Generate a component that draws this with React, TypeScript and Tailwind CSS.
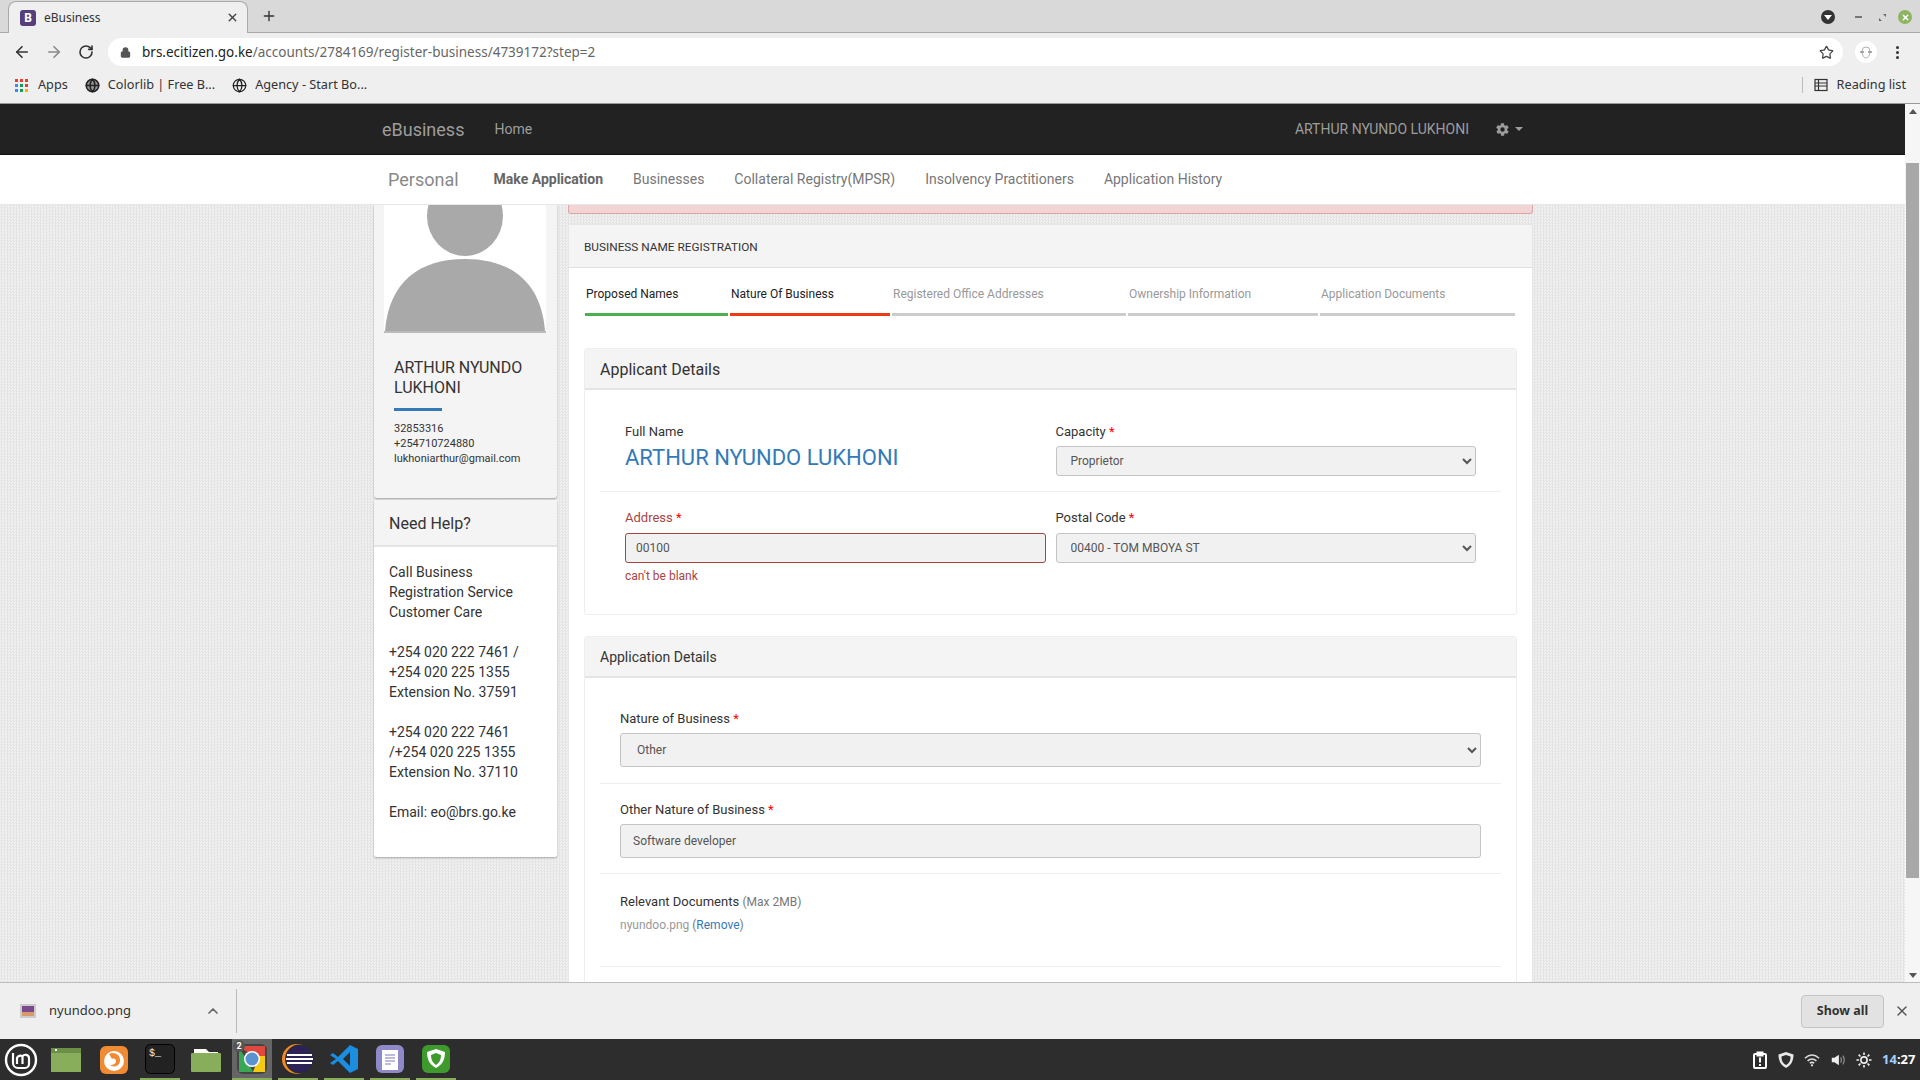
import React from "react";
import { ArrowLeft, ArrowRight, RotateCw, Lock, Star, X, Plus, ChevronUp, Globe } from "lucide-react";

const Req = () => <span className="text-[#ff0000]"> *</span>;
const ctl = "w-full rounded-[3px] border border-[#c4c4c4] bg-[#f1f1f1] text-[12px] text-[#555] outline-none";

function Field({ label, error, children }: { label: string; error?: boolean; children: React.ReactNode }) {
  return (
    <div className="flex-1">
      <label className={`block text-[13px] leading-[16px] mb-[6px] ${error ? "text-[#a94442]" : "text-[#333]"}`}>
        {label}
        <Req />
      </label>
      {children}
    </div>
  );
}

function Card({ title, titleSize, className, children }: { title: string; titleSize: string; className: string; children: React.ReactNode }) {
  return (
    <section className={`border border-[#eeeeee] rounded-[3px] bg-white ${className}`}>
      <h3 className={`h-[41px] pt-[2px] flex items-center px-[15px] bg-[#f4f4f4] border-b-2 border-[#e4e4e4] text-[#333] ${titleSize}`}>{title}</h3>
      {children}
    </section>
  );
}

function Step({ label, width, color, bold }: { label: string; width: string; color: string; bold?: boolean }) {
  return (
    <div className={width}>
      <div className={`h-[41px] pt-[14px] pl-[1px] text-[12px] leading-[16px] ${bold ? "text-[#222]" : "text-[#999]"}`}>{label}</div>
      <div className={`h-[3px] ${color}`} />
    </div>
  );
}

function Tray() {
  return (
    <div className="flex items-center gap-[10px] text-white pr-[4px]">
      <svg width="16" height="18" viewBox="0 0 16 18" fill="none" stroke="#fff" strokeWidth="2"><rect x="2" y="3" width="12" height="14" rx="1" /><path d="M5.500 1.500h5v3h-5zM8 6.500v5M8 13v2" /></svg>
      <svg width="16" height="18" viewBox="0 0 16 18" fill="#e8e8e8"><path d="M8 1l7.500 2.500c0 6-2 10.500-7.500 13.500C2.500 14 .5 9.500 .5 3.500z" /><path d="M8 4l4.500 1.500c0 4-1 6.500-4.500 8.500-3.500-2-4.500-4.500-4.500-8.500z" fill="#2d2d2d" /></svg>
      <svg width="16" height="16" viewBox="0 0 18 18" fill="none" stroke="#ddd" strokeWidth="1.700"><path d="M1 7c5-4.500 11-4.500 16 0M4 10c3-2.500 7-2.500 10 0M6.500 12.500c1.500-1 3.500-1 5 0" /><circle cx="9" cy="15" r="1.300" fill="#ddd" stroke="none" /></svg>
      <svg width="16" height="16" viewBox="0 0 18 18" fill="none"><path d="M2 6.500h3L10 3v12l-5-3.500H2z" fill="#eee" /><path d="M12 6c1 2 1 4 0 6M14.500 4c1.800 3 1.800 7 0 10" stroke="#888" strokeWidth="1.500" /></svg>
      <svg width="16" height="16" viewBox="0 0 18 18" fill="none" stroke="#eee" strokeWidth="1.800"><circle cx="9" cy="9" r="3.500" /><path d="M9 0.500v3M9 14.500v3M0.500 9h3M14.500 9h3M3 3l2 2M13 13l2 2M3 15l2-2M13 5l2-2" /></svg>
      <span className="text-[13px] font-bold text-white font-['Noto_Sans'] w-[34px]"><span className="text-[#9fd0ff]">14</span>:27</span>
    </div>
  );
}

function Slot({ children, active, line, className = "" }: { children: React.ReactNode; active?: boolean; line?: boolean; className?: string }) {
  const bar = active ? "bg-[#666] border-b-[2px] border-[#88ad5b]" : line ? "border-b-[2px] border-[#88ad5b]" : "";
  return <div className={`w-[40px] mr-[6px] flex items-center justify-center ${bar} ${className}`}>{children}</div>;
}

export default function App() {
  return (
    <div className="w-[1920px] h-[1080px] overflow-hidden flex flex-col font-['Roboto',sans-serif] text-[#333] bg-[#efefef]">
      {/* tab strip */}
      <div className="h-[33px] flex items-end bg-[#d9d9d9] border-b border-[#a9a9a9] pl-[8px] pr-[8px] font-['Noto_Sans',sans-serif]">
        <div className="w-[240px] h-[32px] -mb-px bg-[#efefef] rounded-t-[8px] border border-b-0 border-[#a9a9a9] flex items-center pl-[11px] pr-[8px]">
          <span className="w-[16px] h-[16px] rounded-[3px] bg-[#563d7c] text-white text-[12px] font-bold leading-[16px] text-center mr-[8px]">B</span>
          <span className="text-[12px] text-[#333] flex-1">eBusiness</span>
          <X size={13} strokeWidth={2.5} className="text-[#444]" />
        </div>
        <Plus size={16} strokeWidth={2} className="ml-[13px] mb-[8px] text-[#333]" />
        <div className="flex-1" />
        <div className="flex items-center mb-[8px]">
          <span className="w-[14px] h-[14px] rounded-full bg-[#333] flex items-center justify-center"><span className="w-0 h-0 border-x-[4px] border-x-transparent border-t-[5px] border-t-white" /></span>
          <span className="ml-[20px] w-[7px] h-[2px] bg-[#777]" />
          <svg className="ml-[17px]" width="7" height="7" viewBox="0 0 7 7" fill="#666"><path d="M4 0h3v3zM0 4l3 3H0z" /></svg>
          <span className="ml-[12px] w-[14px] h-[14px] rounded-full bg-[#8db561] text-white flex items-center justify-center"><X size={9} strokeWidth={4} /></span>
        </div>
      </div>
      {/* address bar */}
      <div className="h-[36px] pt-[2px] flex items-center bg-[#efefef] pl-[13px]">
        <ArrowLeft size={18} strokeWidth={2.2} className="text-[#333]" />
        <ArrowRight size={18} strokeWidth={2.2} className="ml-[14px] text-[#8a8a8a]" />
        <RotateCw size={16} strokeWidth={2.4} className="ml-[15px] text-[#333]" />
        <div className="ml-[14px] w-[1735px] h-[28px] rounded-full bg-white flex items-center pl-[12px] pr-[9px] text-[13.5px] font-['Noto_Sans',sans-serif]">
          <Lock size={11} fill="#555" strokeWidth={2.5} className="text-[#555]" />
          <span className="ml-[11px] text-[#222]">brs.ecitizen.go.ke</span>
          <span className="text-[#666]">/accounts/2784169/register-business/4739172?step=2</span>
          <span className="flex-1" />
          <Star size={15} strokeWidth={2} className="text-[#444]" />
        </div>
        <span className="ml-[12px] w-[22px] h-[22px] rounded-full bg-white flex items-center justify-center">
          <svg width="14" height="14" viewBox="0 0 14 14" fill="none" stroke="#999" strokeWidth="0.800"><path d="M3 6a4 4 0 0 1 8 0M3 6c0 4 2 7 4 7s4-3 4-7" /><path d="M1 7h4M9 7h4" stroke="#666" strokeWidth="1.200" /></svg>
        </span>
        <span className="ml-[19px] flex flex-col gap-[2px]">
          <i className="w-[3px] h-[3px] rounded-full bg-[#333]" /><i className="w-[3px] h-[3px] rounded-full bg-[#333]" /><i className="w-[3px] h-[3px] rounded-full bg-[#333]" />
        </span>
      </div>
      {/* bookmarks */}
      <div className="h-[35px] flex items-center bg-[#efefef] border-b border-[#9a9a9a] pl-[15px] pr-[14px] pb-[2px] text-[12.700px] text-[#333] font-['Noto_Sans',sans-serif]">
        <span className="grid grid-cols-3 gap-[2px] w-[13px]">
          {["#db4437","#db4437","#db4437","#4285f4","#0f9d58","#db4437","#4285f4","#0f9d58","#f4b400"].map((c, i) => <i key={i} className="h-[3px] w-[3px]" style={{ background: c }} />)}
        </span>
        <span className="ml-[10px]">Apps</span>
        <Globe size={15} strokeWidth={2.5} className="ml-[17px] text-[#222]" fill="#999" />
        <span className="ml-[8px]">Colorlib | Free B...</span>
        <Globe size={15} strokeWidth={2} className="ml-[17px] text-[#222]" />
        <span className="ml-[8px]">Agency - Start Bo...</span>
        <span className="flex-1" />
        <span className="w-px h-[16px] bg-[#bbb] mr-[11px]" />
        <svg width="14" height="14" viewBox="0 0 14 14" fill="none" stroke="#333" strokeWidth="1.200"><rect x="1" y="1.500" width="12" height="11" /><path d="M1 5h12M1 8h12M4.500 1.500v11" /></svg>
        <span className="ml-[9px]">Reading list</span>
      </div>

      {/* page */}
      <div className="flex-1 min-h-0 flex">
        <div className="flex-1 flex flex-col min-w-0">
          <header className="h-[51px] shrink-0 bg-[#222] border-b border-[#111] flex items-center text-[#9d9d9d] text-[14px]">
            <span className="ml-[382px] text-[18px]">eBusiness</span>
            <span className="ml-[30px]">Home</span>
            <span className="flex-1" />
            <span>ARTHUR NYUNDO LUKHONI</span>
            <svg className="ml-[26px]" width="15" height="15" viewBox="0 0 24 24" fill="#9d9d9d"><path d="M19.400 13c.1-.3.100-.7.100-1s0-.7-.1-1l2.100-1.600c.2-.2.200-.4.100-.6l-2-3.500c-.1-.2-.4-.3-.6-.2l-2.500 1c-.5-.4-1.100-.7-1.700-1l-.4-2.600c0-.3-.2-.5-.5-.5h-4c-.3 0-.5.200-.5.500l-.4 2.600c-.6.300-1.200.6-1.700 1l-2.500-1c-.2-.1-.5 0-.6.200l-2 3.500c-.1.200-.1.400.1.600L4.600 11c-.1.300-.1.700-.1 1s0 .7.100 1l-2.100 1.600c-.2.200-.2.400-.1.600l2 3.500c.1.200.4.300.6.200l2.500-1c.5.400 1.100.7 1.700 1l.4 2.600c0 .3.200.5.500.5h4c.3 0 .5-.2.500-.5l.4-2.600c.6-.3 1.200-.6 1.700-1l2.500 1c.2.100.5 0 .6-.2l2-3.500c.1-.2.100-.4-.1-.6zM12 15.500a3.500 3.500 0 1 1 0-7 3.500 3.500 0 0 1 0 7z" /></svg>
            <span className="ml-[5px] mr-[382px] w-0 h-0 border-x-[4px] border-x-transparent border-t-[4px] border-t-[#9d9d9d]" />
          </header>
          <nav className="h-[50px] shrink-0 bg-white border-b border-[#e7e7e7] flex items-center text-[14px] text-[#777]">
            <span className="ml-[388px] text-[18px] text-[#888]">Personal</span>
            <span className="ml-[35px] font-bold text-[#666]">Make Application</span>
            <span className="ml-[30px]">Businesses</span>
            <span className="ml-[30px]">Collateral Registry(MPSR)</span>
            <span className="ml-[30px]">Insolvency Practitioners</span>
            <span className="ml-[30px]">Application History</span>
          </nav>
          <main className="flex-1 min-h-0 overflow-hidden flex items-start pl-[374px] bg-[#ebebeb] bg-[repeating-conic-gradient(#e4e4e4_0_25%,#f1f1f1_0_50%)] bg-[length:3px_3px]">
            {/* sidebar */}
            <aside className="w-[183px] shrink-0 flex flex-col gap-[2px]">
              <div className="h-[293px] bg-[#f4f4f4] rounded-b-[3px] shadow-[0_1px_2px_rgba(0,0,0,0.3)] flex flex-col">
                <div className="mx-[10px] w-[162px] h-[128px] bg-white border-b-2 border-[#bbb] overflow-hidden shrink-0">
                  <svg width="162" height="127" viewBox="0 0 162 127" fill="#a9a9a9">
                    <ellipse cx="81" cy="11" rx="38" ry="40" />
                    <path d="M1 126C5 76 36 54 81 54s76 22 80 72z" />
                  </svg>
                </div>
                <div className="pl-[20px] pr-[18px] pt-[25px] text-[16px] leading-[20px] text-[#333]">ARTHUR NYUNDO LUKHONI</div>
                <div className="ml-[20px] mt-[10px] w-[48px] h-[3px] bg-[#337ab7]" />
                <div className="pl-[20px] pr-[10px] mt-[10px] text-[11px] leading-[15.200px] text-[#333]">
                  <div>32853316</div>
                  <div>+254710724880</div>
                  <div>lukhoniarthur@gmail.com</div>
                </div>
              </div>
              <div className="h-[357px] bg-white rounded-[2px] shadow-[0_1px_2px_rgba(0,0,0,0.3)]">
                <h3 className="h-[47px] pt-[2px] bg-[#f4f4f4] border-b-2 border-[#e4e4e4] flex items-center px-[15px] text-[16px] text-[#333]">Need Help?</h3>
                <div className="px-[15px] pt-[15px] text-[14px] leading-[20px] text-[#333]">
                  <p>Call Business Registration Service Customer Care</p>
                  <p className="mt-[20px]">+254 020 222 7461 / +254 020 225 1355 Extension No. 37591</p>
                  <p className="mt-[20px]">+254 020 222 7461 /+254 020 225 1355 Extension No. 37110</p>
                  <p className="mt-[20px]">Email: eo@brs.go.ke</p>
                </div>
              </div>
            </aside>
            {/* main column */}
            <div className="ml-[11px] w-[965px] shrink-0">
              <div className="h-[9px] bg-[#f2d4d4] border-x border-b border-[#dba6a6] rounded-b-[3px]" />
              <div className="mt-[10px] bg-white border border-[#e6e6e6] min-h-[800px]">
                <div className="h-[43px] pt-[4px] flex items-center px-[15px] bg-[#f4f4f4] border-b border-[#e0e0e0] text-[11.800px] text-[#333]">BUSINESS NAME REGISTRATION</div>
                <div className="flex gap-[2px] pl-[16px] h-[72px] pt-[4px]">
                  <Step label="Proposed Names" width="w-[143px]" color="bg-[#4caf50]" bold />
                  <Step label="Nature Of Business" width="w-[160px]" color="bg-[#f03a17]" bold />
                  <Step label="Registered Office Addresses" width="w-[234px]" color="bg-[#cccccc]" />
                  <Step label="Ownership Information" width="w-[190px]" color="bg-[#cccccc]" />
                  <Step label="Application Documents" width="w-[195px]" color="bg-[#cccccc]" />
                </div>
                <Card title="Applicant Details" titleSize="text-[16px]" className="mx-[15px] mt-[8px] h-[267px]">
                  <div className="px-[15px]">
                    <div className="flex gap-[10px] pl-[25px] pr-[25px] pt-[34px] pb-[15px] border-b border-[#eeeeee]">
                      <div className="flex-1">
                        <div className="text-[13px] leading-[16px] text-[#333]">Full Name</div>
                        <div className="text-[22px] leading-[30px] mt-[3px] text-[#337ab7]">ARTHUR NYUNDO LUKHONI</div>
                      </div>
                      <Field label="Capacity">
                        <select defaultValue="p" className={`${ctl} h-[30px] pl-[10px]`}><option value="p">Proprietor</option></select>
                      </Field>
                    </div>
                    <div className="flex gap-[10px] pl-[25px] pr-[25px] pt-[18px]">
                      <Field label="Address" error>
                        <input readOnly value="00100" className="mt-[1px] w-full h-[30px] rounded-[3px] border border-[#a94442] bg-[#f1f1f1] text-[12px] text-[#555] outline-none px-[10px]" />
                        <div className="mt-[5px] text-[12px] leading-[16px] text-[#a94442]">can't be blank</div>
                      </Field>
                      <Field label="Postal Code">
                        <select defaultValue="t" className={`${ctl} mt-[1px] h-[30px] pl-[10px]`}><option value="t">00400 - TOM MBOYA ST</option></select>
                      </Field>
                    </div>
                  </div>
                </Card>
                <Card title="Application Details" titleSize="text-[14px]" className="mx-[15px] mt-[21px] h-[400px]">
                  <div className="px-[15px]">
                    <div className="px-[20px] pt-[33px] pb-[16px] border-b border-[#eeeeee]">
                      <Field label="Nature of Business">
                        <select defaultValue="o" className={`${ctl} h-[34px] pl-[12px]`}><option value="o">Other</option></select>
                      </Field>
                    </div>
                    <div className="px-[20px] pt-[18px] pb-[15px] border-b border-[#eeeeee]">
                      <Field label="Other Nature of Business">
                        <input readOnly value="Software developer" className={`${ctl} h-[34px] px-[12px]`} />
                      </Field>
                    </div>
                    <div className="px-[20px] pt-[20px] h-[93px] border-b border-[#eeeeee]">
                      <div className="text-[13px] leading-[16px] text-[#333]">Relevant Documents <span className="text-[12px] text-[#777]">(Max 2MB)</span></div>
                      <div className="mt-[7px] text-[12px] leading-[16px] text-[#999]">nyundoo.png <span className="text-[#777]">(</span><span className="text-[#337ab7]">Remove</span><span className="text-[#777]">)</span></div>
                    </div>
                  </div>
                </Card>
              </div>
            </div>
          </main>
        </div>
        {/* scrollbar */}
        <div className="w-[15px] bg-[#f6f6f6] flex flex-col items-center">
          <span className="mt-[5px] w-0 h-0 border-x-[4px] border-x-transparent border-b-[5px] border-b-[#555]" />
          <div className="mt-[49px] w-[13px] h-[715px] bg-[#a8a8a8]" />
          <span className="mt-auto mb-[4px] w-0 h-0 border-x-[4px] border-x-transparent border-t-[5px] border-t-[#555]" />
        </div>
      </div>

      {/* download bar */}
      <div className="h-[57px] shrink-0 bg-[#efefef] border-t border-[#bdbdbd] flex items-center font-['Noto_Sans',sans-serif]">
        <div className="w-[237px] h-[44px] border-r border-[#bbb] flex items-center pl-[20px]">
          <svg width="16" height="14" viewBox="0 0 16 14"><rect width="16" height="14" fill="#ccc" /><rect x="2" y="2" width="12" height="10" fill="#7a4a8c" /><rect x="2" y="8" width="12" height="4" fill="#d79a6a" /></svg>
          <span className="ml-[13px] text-[13px] text-[#333] flex-1">nyundoo.png</span>
          <ChevronUp size={16} strokeWidth={2.5} className="text-[#666] mr-[15px]" />
        </div>
        <div className="flex-1" />
        <button className="w-[83px] h-[33px] rounded-[4px] border border-[#c4c4c4] bg-[#e2e2e2] text-[12.500px] font-bold text-[#333]">Show all</button>
        <X size={16} strokeWidth={2} className="ml-[10px] mr-[10px] text-[#555]" />
      </div>

      {/* taskbar */}
      <div className="h-[41px] shrink-0 bg-[#2d2d2d] flex items-stretch pl-[4px]">
        <div className="w-[34px] flex items-center justify-center">
          <svg width="34" height="34" viewBox="0 0 34 34" fill="none" stroke="#fff"><circle cx="17" cy="17" r="15" strokeWidth="2.400" /><path d="M9 10v10a5 5 0 0 0 5 5h7a4 4 0 0 0 4-4v-6a3.500 3.500 0 0 0-6.500-1.500A3.500 3.500 0 0 0 13 15v6M18.500 14v7" strokeWidth="2.200" /></svg>
        </div>
        <div className="flex ml-[10px]">
          <Slot><svg className="-ml-[4px]" width="30" height="26" viewBox="0 0 30 26"><rect y="1" width="30" height="24" fill="#88ad5b" /><rect y="1" width="30" height="5" fill="#6b8f46" /><rect x="4" y="2" width="2" height="2" fill="#fff" /></svg></Slot>
          <Slot><svg width="28" height="28" viewBox="0 0 28 28"><rect width="28" height="28" rx="6" fill="#f08a33" /><circle cx="14" cy="15" r="10" fill="#fff" /><path d="M9 8c3-2 7-1 9 1 2 2 3 6 1 9-2 3-7 3-9 1 3 0 6-1 6-4 0-2-2-3-4-2-1-2-2-3-3-5z" fill="#f08a33" /></svg></Slot>
          <Slot line><svg width="30" height="30" viewBox="0 0 30 30"><rect x=".5" y=".5" width="29" height="29" rx="5" fill="#222" stroke="#000" /><text x="4" y="12" fontSize="10" fill="#eee" fontFamily="Liberation Mono">$_</text></svg></Slot>
          <Slot><svg width="30" height="26" viewBox="0 0 30 26"><path d="M3 2h12l3 3h9v3H3z" fill="#fff" /><rect y="6" width="30" height="19" rx="1" fill="#88ad5b" /></svg></Slot>
          <Slot active><span className="relative block w-[30px] h-[30px]"><svg width="30" height="30" viewBox="0 0 30 30"><rect width="30" height="30" rx="6" fill="#444" /><path d="M2 2h26v10H15z" fill="#e0483e" /><path d="M28 12v16H16l6-16z" fill="#f6c913" /><path d="M2 4v24h14l-6-12z" fill="#3aa757" /><circle cx="15" cy="15" r="8" fill="#fff" /><circle cx="15" cy="15" r="6.500" fill="#5b93cf" /></svg><span className="absolute -left-[4px] -top-[4px] w-[12px] h-[12px] rounded-full bg-[#555] text-white text-[9px] leading-[12px] text-center font-bold">2</span></span></Slot>
          <Slot line><svg width="32" height="30" viewBox="0 0 32 30"><circle cx="15" cy="15" r="15" fill="#f08a22" /><circle cx="17.500" cy="15" r="14.500" fill="#2d2d2d" /><circle cx="17.500" cy="15" r="13.500" fill="#2c2255" /><path d="M5 11h25M4 15h27M5 19h25" stroke="#fff" strokeWidth="1.800" /></svg></Slot>
          <Slot line><svg width="30" height="30" viewBox="0 0 30 30"><path d="M21 1l8 4v20l-8 4L9 17l-5 4-3-2 6-4-6-4 3-2 5 4z" fill="#1b8ee0" /><path d="M21 8l-7 7 7 7z" fill="#2d2d2d" /></svg></Slot>
          <Slot line><svg width="28" height="28" viewBox="0 0 28 28"><rect width="28" height="28" rx="6" fill="#8f8ac7" /><rect x="6" y="5" width="16" height="20" fill="#fff" /><path d="M9 10h10M9 13h10M9 16h10M9 19h6" stroke="#7d79b8" strokeWidth="1" /></svg></Slot>
          <Slot line><svg width="28" height="28" viewBox="0 0 28 28"><rect width="28" height="28" rx="6" fill="#3f9a2e" /><path d="M14 4l9 3c0 8-3 13-9 16-6-3-9-8-9-16z" fill="#fff" /><path d="M14 8l5 2c0 5-2 8-5 10-3-2-5-5-5-10z" fill="#3f9a2e" /></svg></Slot>
        </div>
        <div className="flex-1" />
        <Tray />
      </div>
    </div>
  );
}
